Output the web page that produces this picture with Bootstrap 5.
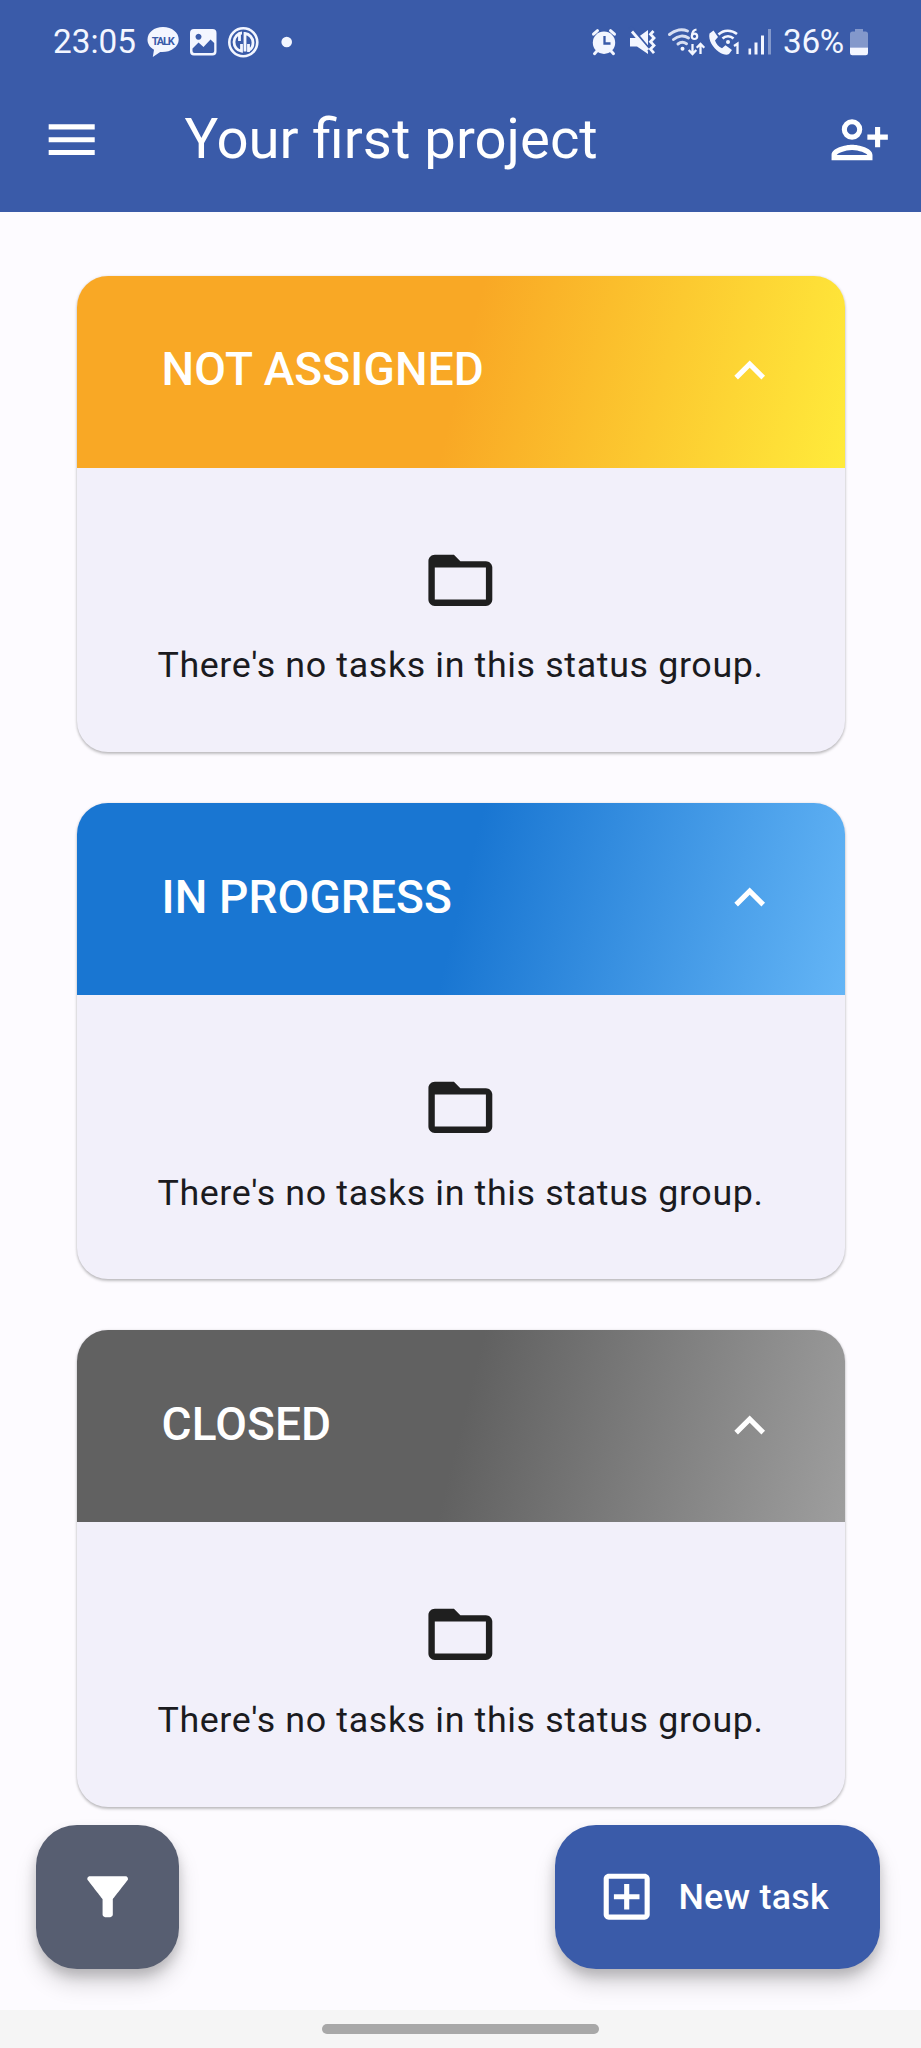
<!DOCTYPE html>
<html lang="en">
<head>
<meta charset="utf-8">
<meta name="viewport" content="width=device-width, initial-scale=1">
<title>Your first project</title>
<link href="https://cdn.jsdelivr.net/npm/bootstrap@5.3.0/dist/css/bootstrap.min.css" rel="stylesheet">
<style>
body{font-family:Roboto,"Noto Sans",sans-serif;background:#fdfbff;color:#1b1b1f;height:2048px;overflow:hidden}
svg{display:block;flex:none}
.top-area{background:#3a5ba9;color:#fff;height:211.5px}
.status-bar{height:84px;padding-left:53px;padding-right:49px;color:#f3f6ff}
.status-text{font-size:33.3px;line-height:40px}
.clock{width:92px}
.battery-text{width:65px;letter-spacing:-.3px}
.app-bar{height:112px;padding:0 31px 0 41px}
.app-title{font-size:56.3px;line-height:66px;font-weight:400;margin-left:82px;padding-bottom:2px}
.ico{width:61.4px;height:61.4px;fill:currentColor}
.board{padding:64px 76.5px 0;gap:51.2px}
.status-card{border:0;border-radius:31px;height:476.3px;background:#f2f0fa;box-shadow:0 2px 3px rgba(0,0,0,.23),0 0 3px rgba(0,0,0,.1)}
.status-head{border:0;height:192px;padding:0 64px 2.500px 85px;color:#fff}
.status-card .status-head{border-radius:31px 31px 0 0}
.status-head h2{font-size:46px;line-height:54px;font-weight:500;letter-spacing:.13px;padding-bottom:2px}
.g-open{background:linear-gradient(104.04deg,#f9a825 50%,#ffeb3b)}
.g-progress{background:linear-gradient(104.04deg,#1976d2 50%,#64b5f6)}
.g-closed{background:linear-gradient(104.04deg,#616161 50%,#9e9e9e)}
.status-body{padding:74px 0 0}
.folder{width:76.7px;height:76.7px;fill:#1f1f1f}
.empty-text{font-size:35.8px;line-height:50px;letter-spacing:.64px;margin-top:22px;white-space:nowrap}
.fab-row{margin:18.500px 41px 0 36px;height:143.3px}
.fab{height:143.3px;border:0;border-radius:41px;color:#fff;box-shadow:0 15px 22px rgba(0,0,0,.15),0 7px 12px rgba(0,0,0,.17)}
.fab-filter{width:143.3px;background:#575e71}
.fab-new{width:325px;background:#3a5ba9;padding:0 0 0 41px;font-size:35.8px;font-weight:500;letter-spacing:.26px}
.fab-new span{margin-left:21px;padding-top:2px}
.nav-strip{height:38px;background:#f5f5f5}
.handle{width:277px;height:10.5px;border-radius:6px;background:#a8a8a8}
</style>
</head>
<body class="d-flex flex-column">
<header class="top-area">
  <div class="status-bar d-flex align-items-center justify-content-between">
    <div class="d-flex align-items-center">
      <span class="status-text clock">23:05</span>
      <svg width="40" height="44" viewBox="145 20 40 44" fill="#f3f6ff"><path d="M163 27c-9 0-15.500 5.500-15.500 12.500 0 4.500 2.500 8 6.500 10.200l-1.200 7.300 7.400-5c9.700.8 18.500-4.500 18.500-12.500C178.700 32.500 172 27 163 27z"/><text x="163.300" y="44.600" text-anchor="middle" font-size="11" font-weight="700" fill="#3a5ba9" textLength="23">TALK</text></svg>
      <svg width="40" height="44" viewBox="185 20 40 44" fill="#f3f6ff"><path fill-rule="evenodd" d="M194 29h18.500q4 0 4 4v18.500q0 4-4 4H194q-4 0-4-4V33q0-4 4-4zM192.500 48.500l6-6 5 4.500 7-7.500 3.700 3.500v8q0 2-2 2h-17.700q-2 0-2-2zM198.500 33.700a3 3 0 1 0 .01 0z"/></svg>
      <svg width="40" height="44" viewBox="225 20 40 44" fill="none" stroke="#f3f6ff"><circle cx="243.300" cy="42.300" r="14" stroke-width="2.600"/><path stroke-width="2.800" d="M242 33c-4 0-8 4-8 9 0 4.500 3 8.500 7.500 9.200V44M245 51.500V33.500c4.500.5 8 4.500 8 9 0 4-2 7-4.500 8M239.500 33.500V41M248.500 44v8"/></svg>
      <svg width="40" height="44" viewBox="265 20 40 44" fill="#f3f6ff"><circle cx="286.700" cy="42" r="5.300"/></svg>
    </div>
    <div class="d-flex align-items-center">
      <svg width="35" height="44" viewBox="588 20 35 44" fill="none" stroke="#f3f6ff"><circle cx="604" cy="42.700" r="11.200" fill="#f3f6ff" stroke="none"/><path stroke-width="3" stroke-linecap="round" d="M593.500 34.200l4-3.500M614.500 34.200l-4-3.500M597 51l-2.500 2.700M611 51l2.500 2.700"/><path stroke="#3a5ba9" stroke-width="2.300" d="M604.500 36v7.500h6"/></svg>
      <svg width="41" height="44" viewBox="623 20 41 44" fill="#f3f6ff"><path d="M630 38h7l11-8v24l-11-7.500h-7z"/><path d="M630 27l21 25" stroke="#3a5ba9" stroke-width="4"/><path fill="none" stroke="#f3f6ff" stroke-width="2.800" d="M632 31.500l16 18.500M653.500 31l-3 3.300 3.500 3.700-3.500 3.700 3.500 3.700-3.500 3.700 3.500 4"/></svg>
      <svg width="43" height="44" viewBox="664 20 43 44" fill="none" stroke="#f3f6ff" stroke-width="3"><g stroke-linecap="round"><path d="M669.500 34.500c6-5 13-5.700 18-3.500M673.500 39.500c4.500-4 10.500-4.500 15-1.500M678 44c2.500-2 6-2 8.500-.3" opacity=".85"/></g><circle cx="682.500" cy="48.700" r="2" fill="#f3f6ff" stroke="none"/><circle cx="694.500" cy="36.300" r="2.700" stroke-width="2.200"/><path stroke-width="2.200" d="M692 36c0-4 1.500-6 4.500-6.500"/><path stroke-width="2.300" d="M692.500 44v10M688.700 50l3.800 4 3.800-4M700.500 54V44M696.700 47.800l3.800-3.800 3.800 3.800"/></svg>
      <svg width="36" height="44" viewBox="707 20 36 44" fill="none" stroke="#f3f6ff"><path fill="#f3f6ff" stroke="none" d="M709.500 33.500l4-3 4.500 6.500-3 3.500c1.200 3.500 3.800 6.300 7 7.800l3.500-3 6.500 4.700-3 4c-2 1.300-6 .7-10-2-6-4-11-12-9.500-18.500z"/><path stroke-width="2.500" d="M718.500 34.500c5-5 13-5 18.500-.5M722.500 38.500c3-3 8-3 11 0"/><circle cx="728" cy="42" r="2" fill="#f3f6ff" stroke="none"/><path stroke-width="2.300" d="M734 46l3.500-2.300V54"/></svg>
      <svg width="40" height="44" viewBox="743 20 40 44" fill="#f3f6ff"><rect x="748.500" y="48.500" width="2.600" height="6"/><rect x="754.500" y="42.500" width="3" height="12"/><rect x="761" y="35.500" width="3" height="19"/><rect x="768" y="29" width="3" height="25.500" opacity=".4"/></svg>
      <span class="status-text battery-text">36%</span>
      <svg width="24" height="44" viewBox="848 20 24 44" fill="#f3f6ff"><path opacity=".4" d="M850 47.500V34q0-2.500 2.500-2.500h2.500V29h8v2.500h2.500q2.500 0 2.500 2.500v13.500z"/><path d="M850 47.500h18V53q0 2.300-2.300 2.300h-13.400Q850 55.300 850 53z"/></svg>
    </div>
  </div>
  <div class="app-bar d-flex align-items-center">
    <svg class="ico" viewBox="0 0 24 24"><path d="M3 18h18v-2H3v2zm0-5h18v-2H3v2zm0-7v2h18V6H3z"/></svg>
    <h1 class="app-title mb-0">Your first project</h1>
    <svg class="ico ms-auto" viewBox="0 0 24 24"><path fill-rule="evenodd" d="M9 4a4 4 0 1 0 0 8 4 4 0 0 0 0-8zm0 2a2 2 0 1 1 0 4 2 2 0 0 1 0-4zM1 18v2h16v-2c0-2.660-5.330-4-8-4s-8 1.340-8 4zm2 0c.2-.71 3.300-2 6-2 2.690 0 5.770 1.280 6 2H3zM20 15v-3h3v-2h-3V7h-2v3h-3v2h3v3h2z"/></svg>
  </div>
</header>

<main class="board d-flex flex-column">
  <section class="card status-card">
    <div class="card-header status-head g-open d-flex align-items-center justify-content-between">
      <h2 class="mb-0">NOT ASSIGNED</h2>
      <svg class="ico" viewBox="0 0 24 24"><path d="M12 8l-6 6 1.410 1.410L12 10.830l4.590 4.580L18 14z"/></svg>
    </div>
    <div class="card-body status-body d-flex flex-column align-items-center">
      <svg class="folder" viewBox="0 0 24 24"><path d="M20 6h-8l-2-2H4c-1.100 0-1.990.9-1.990 2L2 18c0 1.100.9 2 2 2h16c1.100 0 2-.9 2-2V8c0-1.100-.9-2-2-2zm0 12H4V8h16v10z"/></svg>
      <p class="empty-text mb-0">There's no tasks in this status group.</p>
    </div>
  </section>
  <section class="card status-card">
    <div class="card-header status-head g-progress d-flex align-items-center justify-content-between">
      <h2 class="mb-0">IN PROGRESS</h2>
      <svg class="ico" viewBox="0 0 24 24"><path d="M12 8l-6 6 1.410 1.410L12 10.830l4.590 4.580L18 14z"/></svg>
    </div>
    <div class="card-body status-body d-flex flex-column align-items-center">
      <svg class="folder" viewBox="0 0 24 24"><path d="M20 6h-8l-2-2H4c-1.100 0-1.990.9-1.990 2L2 18c0 1.100.9 2 2 2h16c1.100 0 2-.9 2-2V8c0-1.100-.9-2-2-2zm0 12H4V8h16v10z"/></svg>
      <p class="empty-text mb-0">There's no tasks in this status group.</p>
    </div>
  </section>
  <section class="card status-card">
    <div class="card-header status-head g-closed d-flex align-items-center justify-content-between">
      <h2 class="mb-0">CLOSED</h2>
      <svg class="ico" viewBox="0 0 24 24"><path d="M12 8l-6 6 1.410 1.410L12 10.830l4.590 4.580L18 14z"/></svg>
    </div>
    <div class="card-body status-body d-flex flex-column align-items-center">
      <svg class="folder" viewBox="0 0 24 24"><path d="M20 6h-8l-2-2H4c-1.100 0-1.990.9-1.990 2L2 18c0 1.100.9 2 2 2h16c1.100 0 2-.9 2-2V8c0-1.100-.9-2-2-2zm0 12H4V8h16v10z"/></svg>
      <p class="empty-text mb-0">There's no tasks in this status group.</p>
    </div>
  </section>
</main>

<div class="fab-row d-flex justify-content-between">
  <button type="button" class="fab fab-filter d-flex align-items-center justify-content-center p-0" aria-label="Filter">
    <svg class="ico" viewBox="0 0 24 24"><path d="M4.250 5.610C6.270 8.200 10 13 10 13v6c0 .55.45 1 1 1h2c.55 0 1-.45 1-1v-6s3.720-4.800 5.740-7.390A.998.998 0 0 0 18.950 4H5.040c-.83 0-1.300.95-.79 1.610z"/></svg>
  </button>
  <button type="button" class="fab fab-new d-flex align-items-center">
    <svg class="ico" viewBox="0 0 24 24"><path d="M19 3H5c-1.110 0-2 .9-2 2v14c0 1.100.89 2 2 2h14c1.100 0 2-.9 2-2V5c0-1.100-.9-2-2-2zm0 16H5V5h14v14zm-8-2h2v-4h4v-2h-4V7h-2v4H7v2h4z"/></svg>
    <span>New task</span>
  </button>
</div>

<footer class="nav-strip mt-auto d-flex align-items-center justify-content-center">
  <div class="handle"></div>
</footer>
<script src="https://cdn.jsdelivr.net/npm/bootstrap@5.3.0/dist/js/bootstrap.bundle.min.js"></script>
</body>
</html>
